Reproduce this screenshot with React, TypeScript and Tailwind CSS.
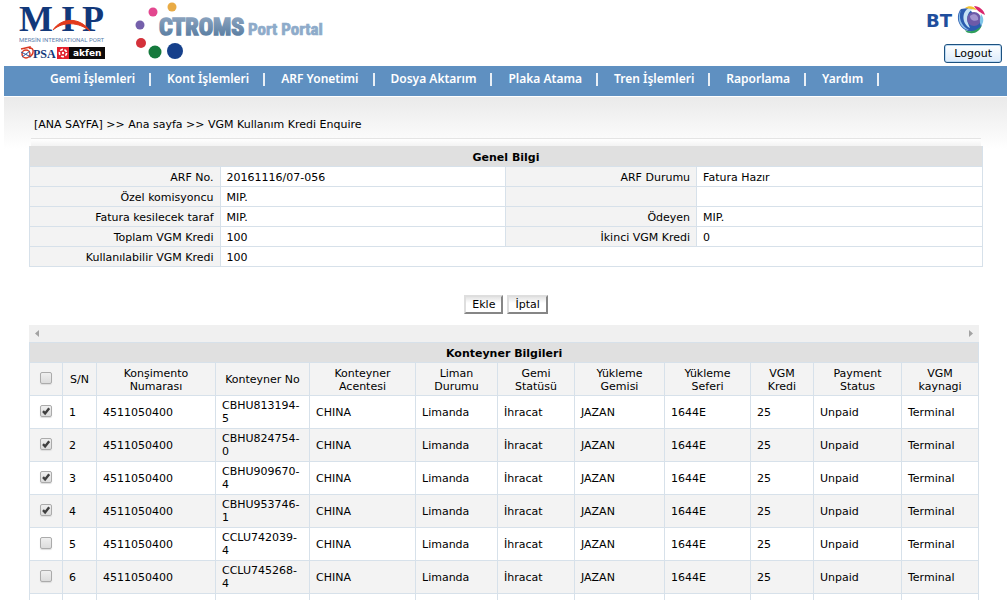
import { useState } from "react";

type Container = {
  no: string;
  billOfLading: string;
  agent: string;
  portStatus: string;
  vesselStatus: string;
  vessel: string;
  voyage: string;
  credit: number;
  payment: string;
  source: string;
};

const NAV_ITEMS = [
  "Gemi İşlemleri",
  "Kont İşlemleri",
  "ARF Yonetimi",
  "Dosya Aktarım",
  "Plaka Atama",
  "Tren İşlemleri",
  "Raporlama",
  "Yardım",
];

const INFO_ROWS = [
  ["ARF No.", "20161116/07-056", "ARF Durumu", "Fatura Hazır"],
  ["Özel komisyoncu", "MIP.", "", ""],
  ["Fatura kesilecek taraf", "MIP.", "Ödeyen", "MIP."],
  ["Toplam VGM Kredi", "100", "İkinci VGM Kredi", "0"],
];

const COLUMNS = [
  { label: "S/N", width: "w-[34px]" },
  { label: "Konşimento Numarası", width: "w-[119px]" },
  { label: "Konteyner No", width: "w-[94px]" },
  { label: "Konteyner Acentesi", width: "w-[106px]" },
  { label: "Liman Durumu", width: "w-[82px]" },
  { label: "Gemi Statüsü", width: "w-[77px]" },
  { label: "Yükleme Gemisi", width: "w-[90px]" },
  { label: "Yükleme Seferi", width: "w-[86px]" },
  { label: "VGM Kredi", width: "w-[63px]" },
  { label: "Payment Status", width: "w-[88px]" },
  { label: "VGM kaynagi", width: "w-[77px]" },
];

const CONTAINERS: Container[] = [
  "CBHU813194-5",
  "CBHU824754-0",
  "CBHU909670-4",
  "CBHU953746-1",
  "CCLU742039-4",
  "CCLU745268-4",
].map((no) => ({
  no,
  billOfLading: "4511050400",
  agent: "CHINA",
  portStatus: "Limanda",
  vesselStatus: "İhracat",
  vessel: "JAZAN",
  voyage: "1644E",
  credit: 25,
  payment: "Unpaid",
  source: "Terminal",
}));

function MipLogo() {
  return (
    <svg width="90" height="60" viewBox="0 0 90 60" role="img" aria-label="MIP">
      <g fontFamily="'Liberation Serif', serif" fontWeight="700" fontSize="36" fill="#12387a">
        <text x="0" y="31">
          M
        </text>
        <text x="42" y="31">
          I
        </text>
        <text x="63" y="31">
          P
        </text>
      </g>
      <path d="M34 30 C42 18 60 16 71 31 C60 22 44 21 34 30 Z" fill="#e23a1c" stroke="#e23a1c" strokeWidth="1" />
      <text x="0" y="42" fontFamily="Roboto, sans-serif" fontSize="6" fill="#5d7fae">
        MERSİN INTERNATIONAL PORT
      </text>
      <g fill="none" stroke="#d93a22" strokeWidth="1.5">
        <path d="M2 49 L11 47 L11 49 M10 48 C16 47 15 55 10 57" />
        <circle cx="7" cy="54" r="4" />
        <path d="M2 52 L12 57 M3 57 L11 51" stroke="#35599c" strokeWidth="1" />
      </g>
      <text x="14" y="58" fontFamily="'Liberation Serif', serif" fontWeight="700" fontSize="12" fill="#12387a">
        PSA
      </text>
      <rect x="38" y="47" width="12" height="12" fill="#e3202c" />
      <circle cx="44" cy="53" r="3.6" fill="none" stroke="#fff" strokeWidth="1.6" strokeDasharray="3 1.5" />
      <circle cx="44" cy="53" r="1.2" fill="#fff" />
      <rect x="50" y="47" width="36" height="12" fill="#0c0a0a" />
      <text x="54" y="56" fontFamily="'DejaVu Sans', sans-serif" fontWeight="700" fontSize="9" fill="#fff">
        akfen
      </text>
    </svg>
  );
}

function CtromsLogo() {
  return (
    <svg width="200" height="64" viewBox="0 0 200 64" role="img" aria-label="CTROMS Port Portal">
      <defs>
        <linearGradient id="steel" x1="0" y1="0" x2="0" y2="1">
          <stop offset="0" stopColor="#94aac4" />
          <stop offset="1" stopColor="#4f759b" />
        </linearGradient>
        <filter id="soft" x="-20%" y="-20%" width="140%" height="140%">
          <feGaussianBlur stdDeviation="0.6" />
        </filter>
      </defs>
      <g filter="url(#soft)">
        <circle cx="40" cy="7" r="4.5" fill="#e9ab45" />
        <circle cx="21" cy="12" r="4.5" fill="#e3468f" />
        <circle cx="8" cy="25" r="4.5" fill="#7460ab" />
        <circle cx="9" cy="43" r="5" fill="#d4303a" />
        <circle cx="23" cy="52" r="6.5" fill="#127a3c" />
        <circle cx="43" cy="51" r="8" fill="#14418b" />
      </g>
      <g fontFamily="'Liberation Sans Narrow', 'Roboto Condensed', Roboto, sans-serif" fontWeight="700">
        <text x="27" y="35" fontSize="24" fill="url(#steel)" stroke="url(#steel)" strokeWidth="1.5">
          CTROMS
        </text>
        <text x="116" y="35" fontSize="17" fill="#8eabca" stroke="#8eabca" strokeWidth="0.7">
          Port Portal
        </text>
      </g>
    </svg>
  );
}

function BtLogo() {
  return (
    <svg width="62" height="34" viewBox="0 0 62 34" role="img" aria-label="BT">
      <text x="2" y="27" fontFamily="'DejaVu Sans', sans-serif" fontWeight="700" fontSize="18" fill="#1f4e9d">
        BT
      </text>
      <path d="M37 9 C31 16 34 28 44 31 C51 33 57 29 58 24 L48 12 L44 8 Z" fill="#2b5cb0" />
      <path d="M37 10 C34 17 37 26 45 30 C36 29 32 18 37 10 Z" fill="#8fc1e8" />
      <path d="M45 8 C37 12 38 24 46 28 C42 20 42 13 49 9 Z" fill="#c5e2f5" />
      <circle cx="50" cy="19" r="7" fill="#6c5aa8" />
      <path d="M46 16 C50 12 55 15 54 20 C50 22 46 20 46 16 Z" fill="#a294cf" />
      <path d="M41 30 C47 33 54 30 58 25 C56 31 51 34 46 33 C43 33 42 32 41 30 Z" fill="#2f9e5b" />
      <path d="M57 14 C60 18 60 22 57 26 C55 22 56 18 57 14 Z" fill="#7ec5e8" />
      <path d="M41 8 C45 5 50 6 53 10 C49 9 45 9 41 8 Z" fill="#f2c230" />
      <path d="M50 6 C55 6 60 10 61 15 C57 13 53 11 50 6 Z" fill="#d9266d" />
    </svg>
  );
}

function Header() {
  return (
    <header className="flex h-[66px] items-start justify-between pl-[19px] pr-[5px]">
      <div className="flex gap-[23px]">
        <MipLogo />
        <CtromsLogo />
      </div>
      <div className="flex flex-col items-end gap-[10px]">
        <div className="pr-4">
          <BtLogo />
        </div>
        <button
          type="button"
          className="h-[19px] rounded-[3px] border border-[#1c5180] bg-linear-to-b from-white to-[#dcebfa] px-[9px] text-[11px] leading-[17px] shadow-[inset_0_0_0_1px_#bcd9f2]"
        >
          Logout
        </button>
      </div>
    </header>
  );
}

function Navigation() {
  return (
    <nav className="ml-1 h-[30px] bg-[#5f90c1] pl-[46px] pt-[6px]">
      <ul className="flex items-center">
        {NAV_ITEMS.map((item) => (
          <li key={item} className="flex items-center whitespace-nowrap">
            <a
              href="#"
              className="font-['Noto_Sans',sans-serif] text-[12px] font-semibold leading-[14px] text-white"
            >
              {item}
            </a>
            <span className="ml-[14px] mr-4 h-[13px] w-[2px] bg-[#e8eff6]" />
          </li>
        ))}
      </ul>
    </nav>
  );
}

function InfoTable() {
  const label = "border border-[#d7e1ea] bg-[#f3f3f3] px-[6px] pt-px text-right font-normal";
  const value = "border border-[#d7e1ea] bg-white px-[6px] pt-px";

  return (
    <table className="w-full table-fixed border-collapse">
      <colgroup>
        <col className="w-[20%]" />
        <col className="w-[30%]" />
        <col className="w-[20%]" />
        <col className="w-[30%]" />
      </colgroup>
      <thead>
        <tr className="h-5">
          <th colSpan={4} className="border border-[#d7e1ea] border-t-[#e0e0e0] bg-[#e0e0e0] pt-px font-bold">
            Genel Bilgi
          </th>
        </tr>
      </thead>
      <tbody>
        {INFO_ROWS.map(([leftLabel, leftValue, rightLabel, rightValue]) => (
          <tr key={leftLabel} className="h-5">
            <th className={label}>{leftLabel}</th>
            <td className={value}>{leftValue}</td>
            <th className={label}>{rightLabel}</th>
            <td className={value}>{rightValue}</td>
          </tr>
        ))}
        <tr className="h-5">
          <th className={label}>Kullanılabilir VGM Kredi</th>
          <td colSpan={3} className={value}>
            100
          </td>
        </tr>
      </tbody>
    </table>
  );
}

function ActionButton({ children }: { children: string }) {
  return (
    <button
      type="button"
      className="h-[19px] border-2 border-b-[#868686] border-l-[#dedede] border-r-[#868686] border-t-[#dedede] bg-linear-to-b from-[#e4e4e4] to-white to-40% px-[6px] leading-[15px]"
    >
      {children}
    </button>
  );
}

function CheckBox({ label, checked, onChange }: { label: string; checked: boolean; onChange: () => void }) {
  return (
    <span className="relative block h-3 w-3">
      <input
        type="checkbox"
        aria-label={label}
        checked={checked}
        onChange={onChange}
        className="block h-3 w-3 appearance-none rounded-[2px] border border-[#ababab] bg-linear-to-b from-[#efefef] to-[#dcdcdc] shadow-[0_1px_1px_#dddddd]"
      />
      {checked && (
        <svg className="pointer-events-none absolute inset-0" width="12" height="12" viewBox="0 0 12 12">
          <path d="M3 6.2 L5.1 8.4 L9.2 3.2" fill="none" stroke="#3f3f3f" strokeWidth="2.4" />
        </svg>
      )}
    </span>
  );
}

function ScrollStrip() {
  return (
    <div className="flex h-[17px] items-center justify-between bg-[#f0f0f0] px-[6px]">
      <svg width="4" height="7" viewBox="0 0 4 7">
        <path d="M4 0 V7 L0 3.5 Z" fill="#a3a3a3" />
      </svg>
      <svg width="4" height="7" viewBox="0 0 4 7">
        <path d="M0 0 V7 L4 3.5 Z" fill="#a3a3a3" />
      </svg>
    </div>
  );
}

function ContainerTable() {
  const [selected, setSelected] = useState<string[]>(CONTAINERS.slice(0, 4).map((c) => c.no));
  const allSelected = selected.length === CONTAINERS.length;

  const toggle = (no: string) =>
    setSelected((prev) => (prev.includes(no) ? prev.filter((n) => n !== no) : [...prev, no]));

  const toggleAll = () => setSelected(allSelected ? [] : CONTAINERS.map((c) => c.no));

  const cell = "border border-[#d7e1ea] px-[6px]";

  return (
    <table className="w-full table-fixed border-collapse">
      <colgroup>
        <col className="w-[33px]" />
        {COLUMNS.map((column) => (
          <col key={column.label} className={column.width} />
        ))}
      </colgroup>
      <thead>
        <tr className="h-5">
          <th colSpan={12} className="border border-[#d7e1ea] bg-[#e0e0e0] pt-px font-bold">
            Konteyner Bilgileri
          </th>
        </tr>
        <tr className="h-[33px] bg-[#f3f3f3]">
          <th className="border border-[#d7e1ea] pb-[2px] pl-[10px]">
            <CheckBox label="Tümünü seç" checked={allSelected} onChange={toggleAll} />
          </th>
          {COLUMNS.map((column) => (
            <th key={column.label} className="border border-[#d7e1ea] px-[5px] pt-px font-normal">
              {column.label}
            </th>
          ))}
        </tr>
      </thead>
      <tbody>
        {CONTAINERS.map((c, i) => (
          <tr key={c.no} className="h-[33px] even:bg-[#f3f3f3]">
            <td className="border border-[#d7e1ea] pb-[2px] pl-[10px]">
              <CheckBox label={c.no} checked={selected.includes(c.no)} onChange={() => toggle(c.no)} />
            </td>
            <td className={cell}>{i + 1}</td>
            <td className={cell}>{c.billOfLading}</td>
            <td className={cell}>{c.no}</td>
            <td className={cell}>{c.agent}</td>
            <td className={cell}>{c.portStatus}</td>
            <td className={cell}>{c.vesselStatus}</td>
            <td className={cell}>{c.vessel}</td>
            <td className={cell}>{c.voyage}</td>
            <td className={cell}>{c.credit}</td>
            <td className={cell}>{c.payment}</td>
            <td className={cell}>{c.source}</td>
          </tr>
        ))}
        <tr className="h-[33px]">
          <td className={cell} />
          {COLUMNS.map((column) => (
            <td key={column.label} className={cell} />
          ))}
        </tr>
      </tbody>
    </table>
  );
}

export default function App() {
  return (
    <div className="h-screen overflow-hidden bg-white font-[Verdana,'DejaVu_Sans',sans-serif] text-[11px] leading-[13px] text-black">
      <Header />
      <Navigation />
      <div className="ml-1 mt-px bg-linear-to-b from-[#eaeaea] to-white to-[52px] pl-[25px] pr-6">
        <div className="mx-[2px] flex h-[42px] items-end border-b border-[#e4e4e4] pb-[7px] pl-[3px]">
          <p>
            <a href="#">[ANA SAYFA]</a> &gt;&gt; Ana sayfa &gt;&gt; VGM Kullanım Kredi Enquire
          </p>
        </div>
        <div className="mx-[2px] h-[7px] bg-linear-to-b from-white to-[#f3f3f3]" />
        <InfoTable />
        <div className="flex justify-center gap-1 pb-[11px] pt-7">
          <ActionButton>Ekle</ActionButton>
          <ActionButton>İptal</ActionButton>
        </div>
        <div className="mr-1">
          <ScrollStrip />
          <ContainerTable />
        </div>
      </div>
    </div>
  );
}
